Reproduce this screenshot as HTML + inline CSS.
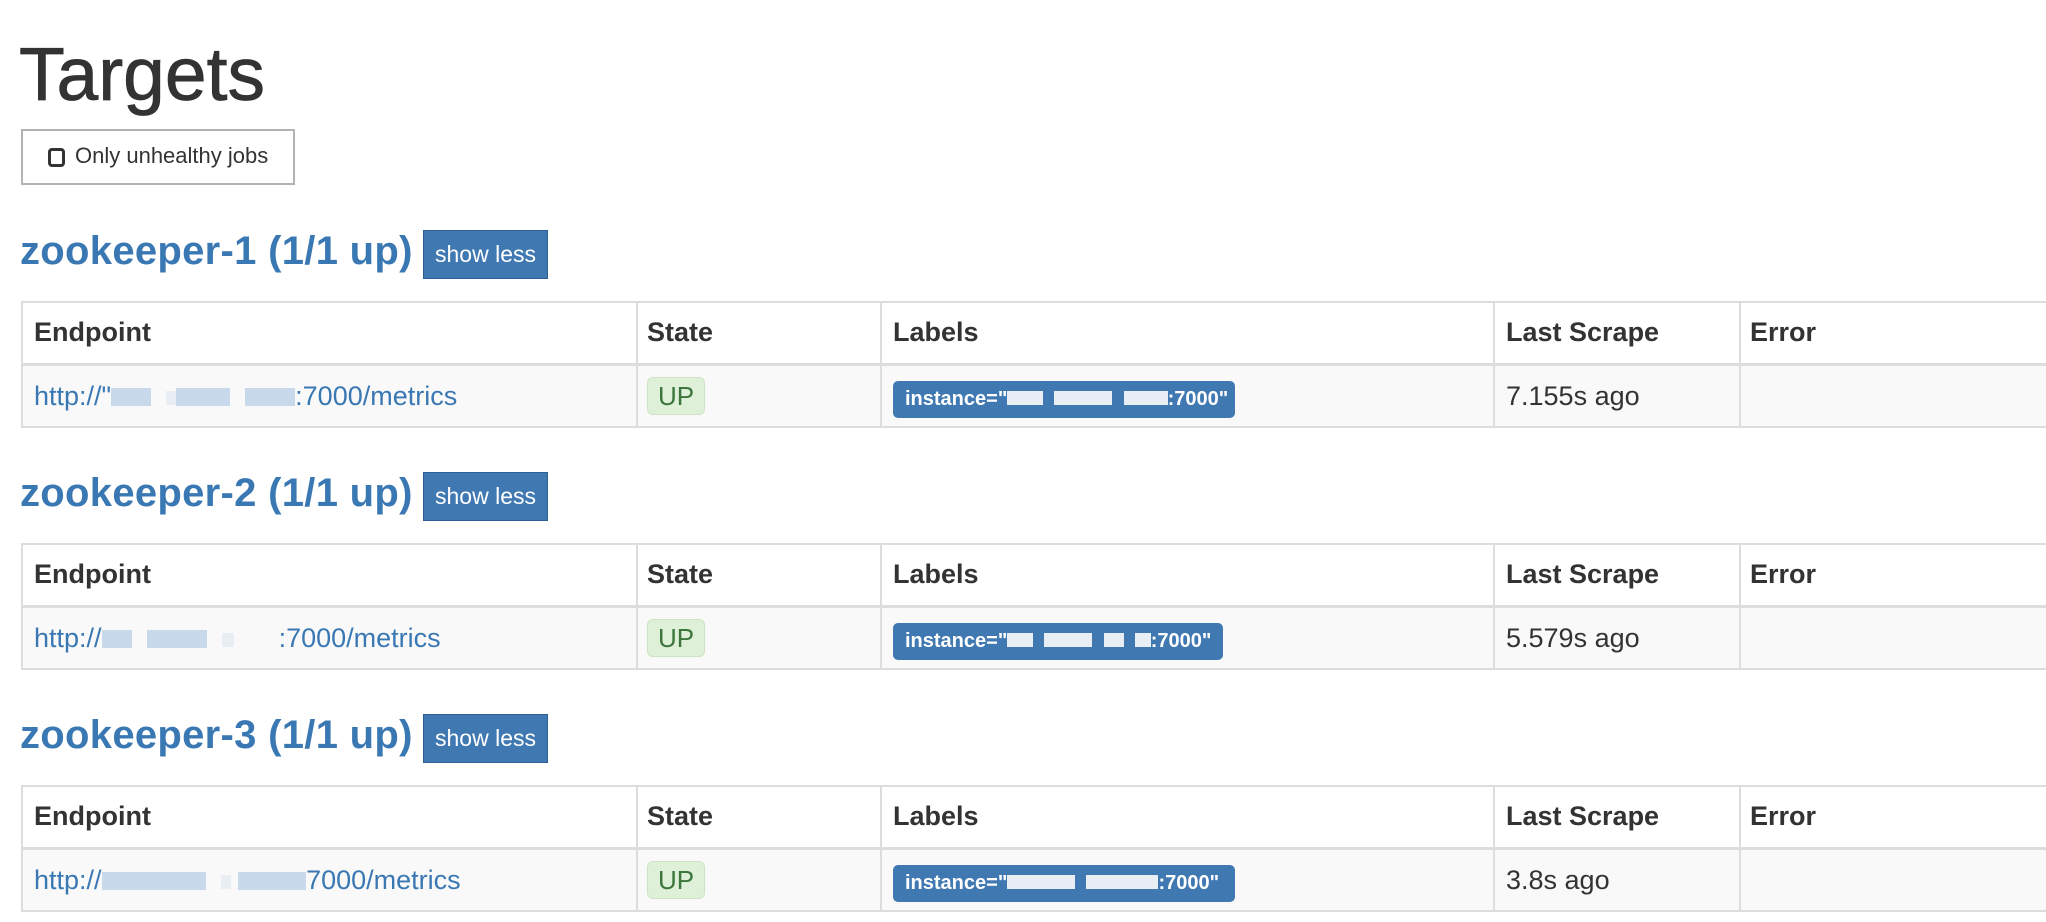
<!DOCTYPE html>
<html><head><meta charset="utf-8"><style>
*{margin:0;padding:0;box-sizing:border-box}
body{width:2046px;height:922px;overflow:hidden;background:#fff;font-family:"Liberation Sans",Arial,sans-serif;color:#333;position:relative}
.a{position:absolute;white-space:nowrap}
h1{position:absolute;left:19px;top:37px;font-size:75px;line-height:75px;font-weight:normal;color:#333;-webkit-text-stroke:0.8px #333}
.chk{left:21px;top:129px;width:274px;height:56px;border:2px solid #b3b3b3}
.ct{left:75px;top:145px;font-size:22px;line-height:22px;color:#333}
.cb{left:48px;top:148px;width:17px;height:19px;border:3px solid #333;border-radius:4px}
.hd{font-size:40px;line-height:40px;font-weight:bold;color:#3a78b3;left:20px;letter-spacing:0.3px}
.btn{left:423px;width:125px;height:49px;background:#4078b2;border:1px solid #2e5f94;color:#fff;font-size:23px;text-align:center;line-height:47px}
.tb{left:21px;width:2040px;height:127px;border:2px solid #ddd}
.hl{left:21px;width:2040px;height:3px;background:#ddd}
.rw{left:23px;width:2040px;height:60px;background:#f9f9f9}
.vl{width:2px;background:#ddd;height:125px}
.th{font-size:27px;line-height:27px;font-weight:bold;color:#333}
.td{font-size:27px;line-height:27px;color:#333}
.lk{color:#3a78b3}
.up{left:647px;width:58px;height:38px;background:#dff0d8;border:1px solid #cfe3c2;border-radius:6px;color:#3c763d;font-size:26px;line-height:36px;text-align:center}
.lb{left:893px;height:37px;background:#4078b2;border-radius:5px;color:#fff;font-size:20px;font-weight:bold;line-height:37px;padding-left:12px}
.bl{display:inline-block;height:18px;background:#c9d9ec;vertical-align:-1px}
.bw{display:inline-block;height:14px;background:#e9eef5;vertical-align:0}
</style></head><body>
<h1>Targets</h1>
<div class="a chk"></div><div class="a cb"></div><div class="a ct">Only unhealthy jobs</div>

<!-- section 1 -->
<div class="a hd" style="top:231px">zookeeper-1 (1/1 up)</div>
<div class="a btn" style="top:230px">show less</div>
<div class="a tb" style="top:301px"></div>
<div class="a rw" style="top:366px"></div>
<div class="a hl" style="top:363px"></div>
<div class="a vl" style="left:636px;top:302px"></div><div class="a vl" style="left:880px;top:302px"></div><div class="a vl" style="left:1493px;top:302px"></div><div class="a vl" style="left:1739px;top:302px"></div>
<div class="a th" style="left:34px;top:319px">Endpoint</div><div class="a th" style="left:647px;top:319px">State</div><div class="a th" style="left:893px;top:319px">Labels</div><div class="a th" style="left:1506px;top:319px">Last Scrape</div><div class="a th" style="left:1750px;top:319px">Error</div>
<div class="a td lk" style="left:34px;top:383px">http://"<span class="bl" style="width:40px"></span> &nbsp;<span class="bw" style="width:10px"></span><span class="bl" style="width:54px"></span> &nbsp;<span class="bl" style="width:50px"></span>:7000/metrics</div>
<div class="a up" style="top:377px">UP</div>
<div class="a lb" style="top:381px;width:342px">instance="<span class="bw" style="width:36px"></span> &nbsp;<span class="bw" style="width:58px"></span> &nbsp;<span class="bw" style="width:44px"></span>:7000"</div>
<div class="a td" style="left:1506px;top:383px">7.155s ago</div>

<!-- section 2 -->
<div class="a hd" style="top:473px">zookeeper-2 (1/1 up)</div>
<div class="a btn" style="top:472px">show less</div>
<div class="a tb" style="top:543px"></div>
<div class="a rw" style="top:608px"></div>
<div class="a hl" style="top:605px"></div>
<div class="a vl" style="left:636px;top:544px"></div><div class="a vl" style="left:880px;top:544px"></div><div class="a vl" style="left:1493px;top:544px"></div><div class="a vl" style="left:1739px;top:544px"></div>
<div class="a th" style="left:34px;top:561px">Endpoint</div><div class="a th" style="left:647px;top:561px">State</div><div class="a th" style="left:893px;top:561px">Labels</div><div class="a th" style="left:1506px;top:561px">Last Scrape</div><div class="a th" style="left:1750px;top:561px">Error</div>
<div class="a td lk" style="left:34px;top:625px">http://<span class="bl" style="width:30px"></span> &nbsp;<span class="bl" style="width:60px"></span> &nbsp;<span class="bw" style="width:12px"></span> &nbsp; &nbsp; &nbsp;:7000/metrics</div>
<div class="a up" style="top:619px">UP</div>
<div class="a lb" style="top:623px;width:330px">instance="<span class="bw" style="width:26px"></span> &nbsp;<span class="bw" style="width:48px"></span> &nbsp;<span class="bw" style="width:20px"></span> &nbsp;<span class="bw" style="width:16px"></span>:7000"</div>
<div class="a td" style="left:1506px;top:625px">5.579s ago</div>

<!-- section 3 -->
<div class="a hd" style="top:715px">zookeeper-3 (1/1 up)</div>
<div class="a btn" style="top:714px">show less</div>
<div class="a tb" style="top:785px"></div>
<div class="a rw" style="top:850px"></div>
<div class="a hl" style="top:847px"></div>
<div class="a vl" style="left:636px;top:786px"></div><div class="a vl" style="left:880px;top:786px"></div><div class="a vl" style="left:1493px;top:786px"></div><div class="a vl" style="left:1739px;top:786px"></div>
<div class="a th" style="left:34px;top:803px">Endpoint</div><div class="a th" style="left:647px;top:803px">State</div><div class="a th" style="left:893px;top:803px">Labels</div><div class="a th" style="left:1506px;top:803px">Last Scrape</div><div class="a th" style="left:1750px;top:803px">Error</div>
<div class="a td lk" style="left:34px;top:867px">http://<span class="bl" style="width:104px"></span> &nbsp;<span class="bw" style="width:10px"></span> <span class="bl" style="width:68px"></span>7000/metrics</div>
<div class="a up" style="top:861px">UP</div>
<div class="a lb" style="top:865px;width:342px">instance="<span class="bw" style="width:68px"></span> &nbsp;<span class="bw" style="width:72px"></span>:7000"</div>
<div class="a td" style="left:1506px;top:867px">3.8s ago</div>
</body></html>
